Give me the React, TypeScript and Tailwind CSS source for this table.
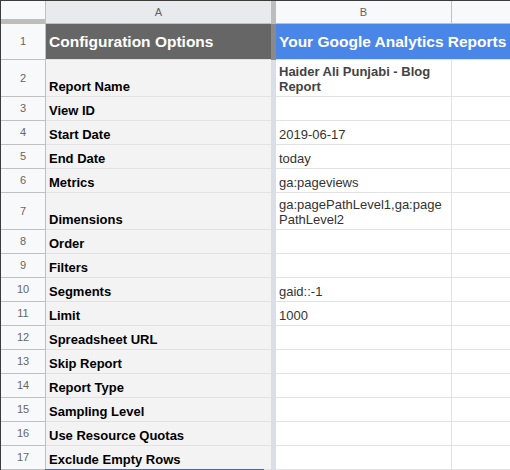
import React from "react";

type Row = { n: number; h: number; label: string; value?: React.ReactNode; bold?: boolean };

const rows: Row[] = [
  { n: 2, h: 37, label: "Report Name", value: (<>Haider Ali Punjabi - Blog<br />Report</>), bold: true },
  { n: 3, h: 24, label: "View ID" },
  { n: 4, h: 24, label: "Start Date", value: "2019-06-17" },
  { n: 5, h: 24, label: "End Date", value: "today" },
  { n: 6, h: 24, label: "Metrics", value: "ga:pageviews" },
  { n: 7, h: 37, label: "Dimensions", value: (<>ga:pagePathLevel1,ga:page<br />PathLevel2</>) },
  { n: 8, h: 24, label: "Order" },
  { n: 9, h: 24, label: "Filters" },
  { n: 10, h: 24, label: "Segments", value: "gaid::-1" },
  { n: 11, h: 24, label: "Limit", value: "1000" },
  { n: 12, h: 24, label: "Spreadsheet URL" },
  { n: 13, h: 24, label: "Skip Report" },
  { n: 14, h: 24, label: "Report Type" },
  { n: 15, h: 24, label: "Sampling Level" },
  { n: 16, h: 24, label: "Use Resource Quotas" },
  { n: 17, h: 24, label: "Exclude Empty Rows" },
];

export default function App() {
  return (
    <div
      className="relative w-[510px] h-[470px] overflow-hidden bg-white border-l border-t border-[#3c3c3c]"
      style={{ fontFamily: '"Liberation Sans", Arial, sans-serif' }}
    >
      {/* column header row */}
      <div className="flex h-[23px]">
        <div className="w-[45px] shrink-0 flex flex-col border-r border-[#c0c0c0] bg-[#f8f9fa]">
          <div className="flex-1" />
          <div className="h-[5px] bg-[#bdbdbd]" />
        </div>
        <div className="w-[225px] shrink-0 flex items-center justify-center bg-[#e8eaed] border-b border-[#c0c0c0] text-[11px] text-[#5f6368]">
          A
        </div>
        <div className="w-[5px] shrink-0 bg-[#bdbdbd]" />
        <div className="w-[176px] shrink-0 flex items-center justify-center bg-[#f8f9fa] border-r border-b border-[#c0c0c0] text-[11px] text-[#5f6368]">
          B
        </div>
        <div className="flex-1 bg-[#f8f9fa] border-b border-[#c0c0c0]" />
      </div>

      {/* row 1 */}
      <div className="flex h-[36px]">
        <div className="w-[45px] shrink-0 flex items-center justify-center border-r border-b border-[#c0c0c0] bg-[#f8f9fa] text-[11px] text-[#666666]">
          1
        </div>
        <div className="w-[225px] shrink-0 flex items-center pl-[3px] pt-[1px] bg-[#666666] border-b border-[#e2e2e2] text-[15.5px] font-bold text-white whitespace-nowrap">
          Configuration Options
        </div>
        <div className="w-[5px] shrink-0 bg-[#8a8a8a]" />
        <div className="flex-1 flex items-center pl-[3px] pt-[1px] bg-[#4a86e8] border-b border-[#e2e2e2] text-[15.5px] font-bold text-white whitespace-nowrap overflow-hidden">
          Your Google Analytics Reports
        </div>
      </div>

      {rows.map((r) => (
        <div key={r.n} className="flex" style={{ height: r.h }}>
          <div className="w-[45px] shrink-0 flex items-center justify-center border-r border-b border-[#c0c0c0] bg-[#f8f9fa] text-[11px] text-[#666666]">
            {r.n}
          </div>
          <div className="w-[225px] shrink-0 flex items-end pl-[3px] pb-[2px] bg-[#f3f3f3] border-b border-[#e2e2e2] text-[13px] leading-[15px] font-bold text-black whitespace-nowrap">
            {r.label}
          </div>
          <div className="w-[5px] shrink-0 bg-[#dadfe7]" />
          <div
            className={
              r.bold
                ? "w-[176px] shrink-0 flex items-end pl-[3px] pb-[2px] border-r border-b border-[#e2e2e2] text-[13px] leading-[15px] font-bold text-[#434343] whitespace-nowrap"
                : "w-[176px] shrink-0 flex items-end pl-[3px] pb-[2px] border-r border-b border-[#e2e2e2] text-[13px] leading-[15px] text-[#333333] whitespace-nowrap"
            }
          >
            <div>{r.value}</div>
          </div>
          <div className="flex-1 border-b border-[#e2e2e2]" />
        </div>
      ))}

      {/* selection edge */}
      <div className="absolute left-[44px] top-[468px] w-[219px] h-[2px] bg-[#1a73e8]" />
    </div>
  );
}
